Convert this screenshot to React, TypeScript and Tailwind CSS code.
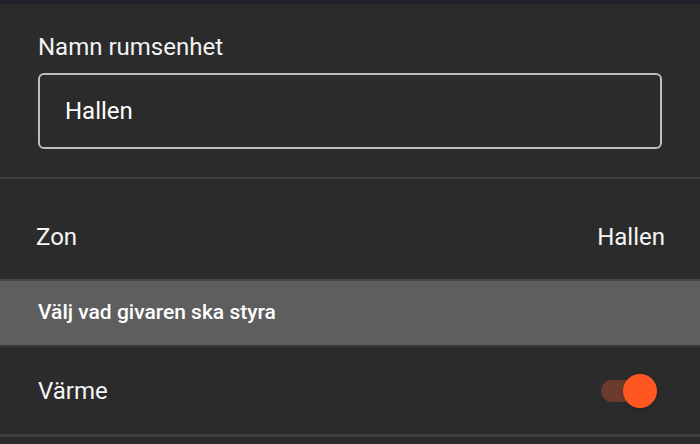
import { useState } from "react";

export default function App() {
  const [heat, setHeat] = useState(true);
  const [name, setName] = useState("Hallen");

  return (
    <div
      className="w-[700px] h-[444px] overflow-hidden bg-[#2b2b2b] text-white flex flex-col"
      style={{ fontFamily: "Roboto, 'Noto Sans', sans-serif" }}
    >
      {/* status strip */}
      <div className="h-[4px] bg-[#21212a] shrink-0" />

      {/* room unit name */}
      <div className="px-[38px] pt-[28px] h-[173px] shrink-0">
        <label className="block text-[24px] leading-[30px] text-[#f2f2f2]">Namn rumsenhet</label>
        <input
          value={name}
          onChange={(e) => setName(e.target.value)}
          className="mt-[11px] w-[624px] h-[76px] rounded-[6px] border-2 border-[#bdbdbd] bg-transparent px-[25px] text-[24px] text-white outline-none"
        />
      </div>

      <div className="h-[2px] bg-[#3f3f3f] shrink-0" />

      {/* zone row */}
      <div className="h-[100px] px-[36px] pt-[16px] flex items-center justify-between text-[24px] text-[#f5f5f5] shrink-0">
        <span>Zon</span>
        <span className="mr-[-1px]">Hallen</span>
      </div>

      {/* section header */}
      <div className="h-[2px] bg-[#474747] shrink-0" />
      <div className="h-[64px] bg-[#5e5e5e] px-[38px] flex items-center text-[21px] font-medium text-white shrink-0">
        Välj vad givaren ska styra
      </div>
      <div className="h-[2px] bg-[#3a3a3a] shrink-0" />

      {/* heat toggle row */}
      <div className="h-[87px] px-[38px] flex items-center justify-between text-[24px] text-[#f5f5f5] shrink-0">
        <span>Värme</span>
        <button
          onClick={() => setHeat(!heat)}
          className="relative w-[58px] h-[34px] mr-[5px] flex items-center"
        >
          <span
            className={
              "absolute left-[2px] w-[50px] h-[22px] rounded-full " +
              (heat ? "bg-[#6b3b2d]" : "bg-[#6b6b6b]")
            }
          />
          <span
            className={
              "absolute top-0 w-[34px] h-[34px] rounded-full shadow-md " +
              (heat ? "left-[24px] bg-[#ff5722]" : "left-0 bg-[#e0e0e0]")
            }
          />
        </button>
      </div>

      <div className="h-[3px] bg-[#3f3f3f] shrink-0" />
    </div>
  );
}
